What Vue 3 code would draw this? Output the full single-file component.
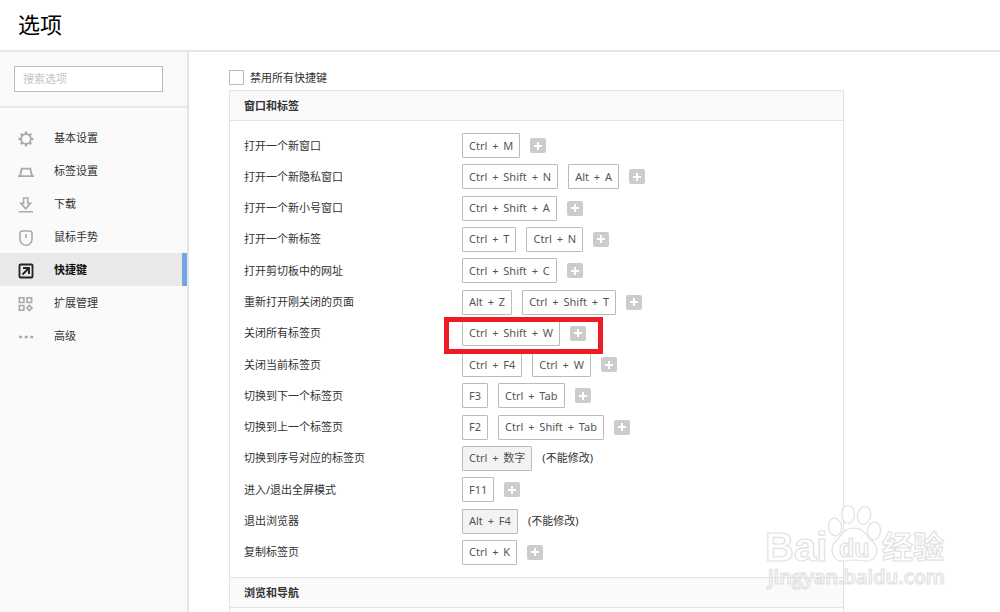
<script setup>
import { ref } from 'vue'

const query = ref('')
const disabled = ref(false)

const menu = [
  { id: 'gear', label: '基本设置' },
  { id: 'tab', label: '标签设置' },
  { id: 'download', label: '下载' },
  { id: 'mouse', label: '鼠标手势' },
  { id: 'shortcut', label: '快捷键', active: true },
  { id: 'extension', label: '扩展管理' },
  { id: 'more', label: '高级' },
]

const shortcuts = [
  { name: '打开一个新窗口', keys: ['Ctrl + M'] },
  { name: '打开一个新隐私窗口', keys: ['Ctrl + Shift + N', 'Alt + A'] },
  { name: '打开一个新小号窗口', keys: ['Ctrl + Shift + A'] },
  { name: '打开一个新标签', keys: ['Ctrl + T', 'Ctrl + N'] },
  { name: '打开剪切板中的网址', keys: ['Ctrl + Shift + C'] },
  { name: '重新打开刚关闭的页面', keys: ['Alt + Z', 'Ctrl + Shift + T'] },
  { name: '关闭所有标签页', keys: ['Ctrl + Shift + W'], marked: true },
  { name: '关闭当前标签页', keys: ['Ctrl + F4', 'Ctrl + W'] },
  { name: '切换到下一个标签页', keys: ['F3', 'Ctrl + Tab'] },
  { name: '切换到上一个标签页', keys: ['F2', 'Ctrl + Shift + Tab'] },
  { name: '切换到序号对应的标签页', keys: ['Ctrl + 数字'], locked: true },
  { name: '进入/退出全屏模式', keys: ['F11'] },
  { name: '退出浏览器', keys: ['Alt + F4'], locked: true },
  { name: '复制标签页', keys: ['Ctrl + K'] },
]

const teeth = [0, 45, 90, 135, 180, 225, 270, 315]
</script>

<template>
  <div class="page">
    <header class="top">
      <h1>选项</h1>
    </header>
    <div class="body">
      <aside class="side">
        <div class="search">
          <input v-model="query" type="text" placeholder="搜索选项" aria-label="搜索选项" />
        </div>
        <nav class="menu">
          <a v-for="m in menu" :key="m.id" href="#" :class="{ active: m.active }">
            <svg class="icon" viewBox="0 0 16 16" fill="none" stroke="currentColor" stroke-width="1.6" aria-hidden="true">
              <g v-if="m.id === 'gear'">
                <circle cx="8" cy="8" r="4.8" stroke-width="1.8" />
                <path v-for="t in teeth" :key="t" d="M8 3V.6" stroke-width="2.4" :transform="`rotate(${t} 8 8)`" />
              </g>
              <path v-else-if="m.id === 'tab'" d="M0 12.2h16M2 12 3.700 4.600h8.600L14 12" stroke-width="1.8" />
              <path v-else-if="m.id === 'download'" d="M.8 14.800h14.200M5.600 1h4.200v5.400h2.800L7.700 11.800 2.800 6.400h2.800z" />
              <path v-else-if="m.id === 'mouse'" d="M4.500 1h7Q14 1 14 3.500V9c0 3.600-2.700 6.200-6 6.200S2 12.600 2 9V3.500Q2 1 4.500 1zM8 4v4" />
              <g v-else-if="m.id === 'shortcut'">
                <rect x="1.500" y="1.500" width="13" height="13" rx="1" stroke-width="1.800" />
                <path d="M4.500 11.500 10.500 5.500M5 5h6v6" stroke-width="1.900" />
              </g>
              <g v-else-if="m.id === 'extension'">
                <rect x="1.300" y="1.800" width="4.600" height="4.600" />
                <rect x="9" y="1.800" width="4.600" height="4.600" />
                <rect x="1.300" y="9.600" width="4.600" height="4.600" />
                <path d="M11.400 9.200 14 11.900l-2.600 2.700-2.600-2.700z" />
              </g>
              <path v-else d="M1.200 8h3M6.700 8h3M12.200 8h3" stroke-width="2.600" />
            </svg>
            <span>{{ m.label }}</span>
          </a>
        </nav>
      </aside>

      <main class="main">
        <label class="toggle">
          <input v-model="disabled" type="checkbox" />
          <span>禁用所有快捷键</span>
        </label>
        <section class="panel">
          <h2>窗口和标签</h2>
          <div class="rows">
            <table>
              <tbody>
                <tr v-for="s in shortcuts" :key="s.name">
                  <th scope="row">{{ s.name }}</th>
                  <td>
                    <div class="keys">
                      <button v-for="k in s.keys" :key="k" type="button" class="key" :disabled="s.locked">
                        <template v-for="(part, i) in k.split(' + ')" :key="part"><span v-if="i" class="plus"> + </span>{{ part }}</template>
                      </button>
                      <span v-if="s.locked">(不能修改)</span>
                      <button v-else type="button" class="add" :aria-label="`添加：${s.name}`">
                        <svg viewBox="0 0 8 8" aria-hidden="true"><path d="M4 0v8M0 4h8" stroke="#fff" stroke-width="2" /></svg>
                      </button>
                      <i v-if="s.marked" class="mark"></i>
                    </div>
                  </td>
                </tr>
              </tbody>
            </table>
          </div>
          <h2 class="next">浏览和导航</h2>
        </section>
      </main>
    </div>

    <svg class="watermark" viewBox="0 0 200 104" aria-hidden="true">
      <g fill="#fff" stroke="#dadada" stroke-width="1.2">
        <text class="latin" x="5" y="64" font-size="40">Bai</text>
        <ellipse cx="75" cy="30" rx="6.500" ry="9" transform="rotate(-8 75 30)" />
        <ellipse cx="88" cy="17.500" rx="6.500" ry="9" />
        <ellipse cx="104" cy="18.500" rx="6.500" ry="9" transform="rotate(12 104 18.500)" />
        <ellipse cx="114" cy="34" rx="6.500" ry="9" transform="rotate(6 114 34)" />
        <path d="M94 31C84 31 82 38 77 43C68 51 72 65 84 64Q94 62 104 64C117 65 121 52 112 44C105 38 104 31 94 31z" />
        <text class="latin" x="79" y="60" font-size="25">du</text>
        <text class="cjk" x="122" y="61" font-size="31">经验</text>
        <text class="url" x="8" y="87" font-size="20">jingyan.baidu.com</text>
      </g>
    </svg>
  </div>
</template>

<style>
body {
  background: #fff;
}
</style>

<style scoped>
.page,
.page * {
  box-sizing: border-box;
}
.page {
  position: relative;
  display: flex;
  flex-direction: column;
  height: 100vh;
  overflow: hidden;
  color: #333;
  font: 11px/16px "Noto Sans", "Noto Sans CJK SC", sans-serif;
}
.page h1,
.page h2 {
  margin: 0;
}
.page input,
.page button {
  font: inherit;
}
.top {
  flex: none;
  padding: 8px 18px 10px;
  border-bottom: 2px solid #e6e6e6;
}
.top h1 {
  color: #000;
  font-size: 22px;
  font-weight: 400;
  line-height: 32px;
}
.body {
  display: flex;
  flex: 1;
  min-height: 0;
}
.side {
  flex: none;
  width: 189px;
  border-right: 2px solid #e4e4e4;
  background: #fafafa;
}
.search {
  padding: 14px 24px 14px 14px;
  border-bottom: 2px solid #e8e8e8;
}
.search input {
  display: block;
  width: 100%;
  height: 26px;
  padding: 0 8px 2px;
  border: 1px solid #bbb;
  background: #fff;
}
.search input::placeholder {
  color: #c4c4c4;
}
.menu {
  padding-top: 13px;
}
.menu a {
  display: flex;
  align-items: center;
  gap: 20px;
  height: 33px;
  padding-left: 18px;
  border-right: 5px solid transparent;
  color: #333;
  text-decoration: none;
}
.menu a.active {
  border-color: #73a5e6;
  background: #e9e9e9;
  color: #111;
  font-weight: 700;
}
.icon {
  flex: none;
  width: 16px;
  height: 16px;
  margin-top: 2px;
  color: #aaa;
}
.active .icon {
  color: #222;
}
.main {
  flex: 1;
  padding: 17px 40px 0;
}
.toggle {
  display: flex;
  align-items: center;
  gap: 6px;
  width: max-content;
  height: 17px;
}
.toggle input {
  appearance: none;
  width: 15px;
  height: 15px;
  margin: 0;
  border: 1px solid #bbb;
  background: #fff;
}
.panel {
  max-width: 615px;
  height: 600px;
  margin-top: 4px;
  border: 1px solid #e3e3e3;
}
.panel h2 {
  padding: 6px 14px;
  border-bottom: 1px solid #e3e3e3;
  background: #fafafa;
  font-size: 11px;
  line-height: 17px;
}
.panel .next {
  border-top: 1px solid #e3e3e3;
}
.rows {
  padding: 9px 14px;
}
table {
  width: 100%;
  height: 438px;
  border-collapse: collapse;
}
th,
td {
  padding: 0;
  text-align: left;
  vertical-align: middle;
}
th {
  width: 218px;
  font-weight: 400;
}
.keys {
  position: relative;
  display: flex;
  align-items: center;
  gap: 10px;
  width: max-content;
}
.key {
  height: 25px;
  padding: 0 6px;
  border: 1px solid #bbb;
  border-radius: 1px;
  background: #fff;
  color: #555;
}
.key:disabled {
  background: #f3f3f3;
}
.plus {
  margin: 0 2px;
}
.add {
  display: grid;
  place-items: center;
  width: 16px;
  height: 15px;
  padding: 0;
  border: 0;
  border-radius: 2px;
  background: #ccc;
}
.add svg {
  width: 8px;
  height: 8px;
}
.mark {
  position: absolute;
  z-index: 1;
  inset: -4px -17px -8px -18px;
  border: 5px solid #ed1c24;
  pointer-events: none;
}
.watermark {
  position: absolute;
  right: 40px;
  bottom: 11px;
  width: 200px;
  height: 104px;
  opacity: 0.8;
  pointer-events: none;
}
.latin {
  font-family: "Liberation Sans", sans-serif;
  font-weight: 700;
}
.cjk {
  font-family: "Noto Sans CJK SC", sans-serif;
  font-weight: 700;
}
.url {
  font-family: "Open Sans", sans-serif;
  font-weight: 600;
}
</style>
